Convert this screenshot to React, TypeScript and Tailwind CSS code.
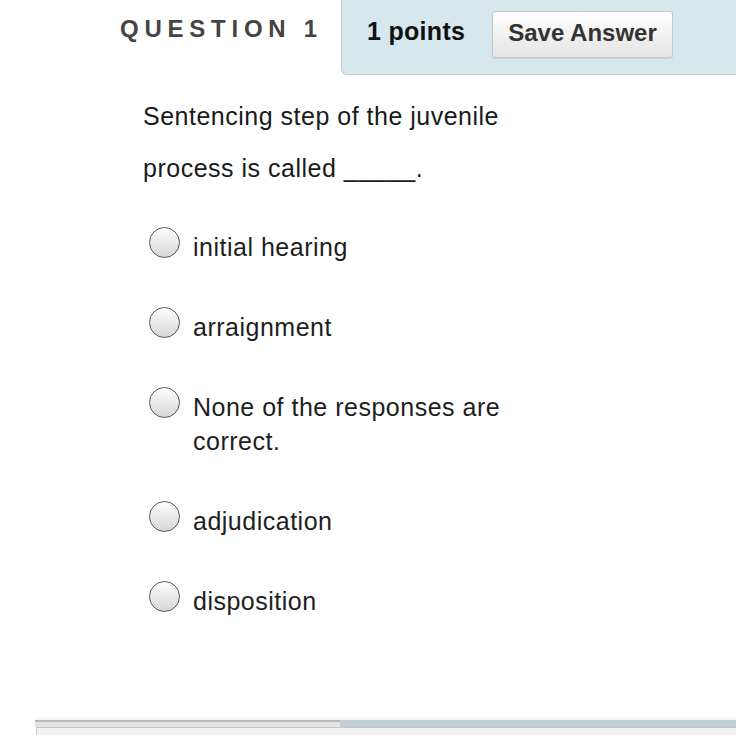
export default function App() {
  const options = [
    'initial hearing',
    'arraignment',
    'None of the responses are correct.',
    'adjudication',
    'disposition',
  ];

  return (
    <div className="relative w-[736px] h-[735px] overflow-hidden bg-white font-['Liberation_Sans',Arial,sans-serif]">
      <div className="flex h-[75px]">
        <div className="w-[341px] pl-[120px] pt-[11px]">
          <span className="text-[24px] font-bold tracking-[0.24em] text-[#444]">QUESTION 1</span>
        </div>
        <div className="flex-1 flex items-start bg-[#d6e8ee] border-l border-b border-[#bfcdd2] rounded-bl-[6px] pl-[25px] pt-[11px]">
          <span className="text-[25px] font-bold text-[#111] mt-[2px] leading-[36px] tracking-[0.3px]">1 points</span>
          <button className="ml-[27px] h-[47px] px-[15px] pb-[3px] text-[24px] font-bold text-[#333] border border-[#c6c6c6] rounded-[3px] bg-gradient-to-b from-white to-[#e4e4e4] shadow-[0_1px_1px_rgba(0,0,0,0.08)]">
            Save Answer
          </button>
        </div>
      </div>

      <div className="pl-[143px] pt-[15px] w-[560px]">
        <p className="text-[25px] leading-[52px] tracking-[0.5px] text-[#1a1a1a]">
          Sentencing step of the juvenile
          <br />
          process is called _____.
        </p>

        <div className="mt-[36px] flex flex-col gap-[46px] pl-[6px]">
          {options.map((o) => (
            <label key={o} className="flex items-start gap-[13px]">
              <span className="shrink-0 mt-[-3px] w-[31px] h-[31px] rounded-full border-[1.5px] border-[#555] bg-gradient-to-b from-white to-[#d6d6d6]" />
              <span className="w-[330px] text-[25px] leading-[34px] tracking-[0.5px] text-[#1e1e1e]">{o}</span>
            </label>
          ))}
        </div>
      </div>

      <div className="absolute left-0 right-0 top-[720px] bottom-0">
        <div className="ml-[35px] flex h-[7px] shadow-[0_-2px_3px_rgba(0,0,0,0.04)]">
          <div className="w-[305px] border-t-2 border-[#b9b9b9] bg-[#e4e4e4]" />
          <div className="flex-1 bg-[#c3d0d3]" />
        </div>
        <div className="ml-[36px] h-full border-l border-t border-[#c6c6c6] bg-[#f1f1f1]" />
      </div>
    </div>
  );
}
